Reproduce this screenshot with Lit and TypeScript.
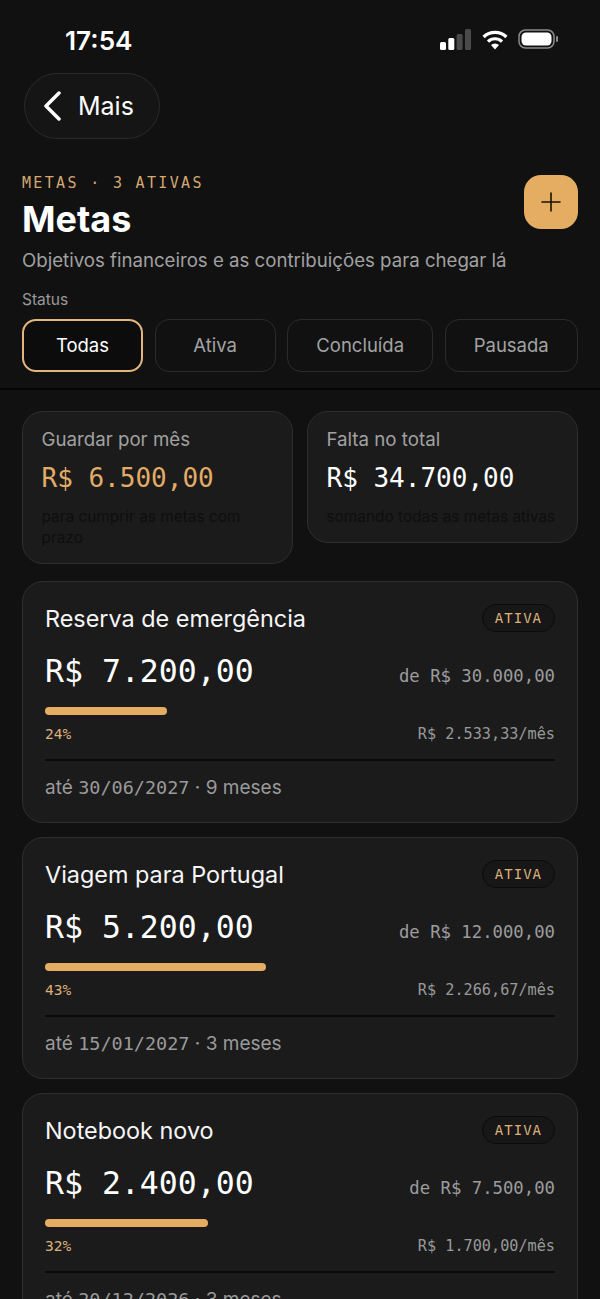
import { LitElement, css, html } from "lit";
import { customElement } from "lit/decorators.js";

const goals = [
  { name: "Reserva de emergência", saved: "R$ 7.200,00", total: "de R$ 30.000,00", pct: 24, width: 24, monthly: "R$ 2.533,33/mês", date: "30/06/2027", left: "9 meses" },
  { name: "Viagem para Portugal", saved: "R$ 5.200,00", total: "de R$ 12.000,00", pct: 43, width: 43.33, monthly: "R$ 2.266,67/mês", date: "15/01/2027", left: "3 meses" },
  { name: "Notebook novo", saved: "R$ 2.400,00", total: "de R$ 7.500,00", pct: 32, width: 32, monthly: "R$ 1.700,00/mês", date: "20/12/2026", left: "3 meses" },
];

@customElement("app-root")
export class AppRoot extends LitElement {
  static styles = css`
    :host {
      display: block;
      height: 1299px;
      overflow: hidden;
      background: #111112;
      color: #fff;
      font-family: Inter, "Liberation Sans", sans-serif;
    }
    .mono { font-family: "DejaVu Sans Mono", "Liberation Mono", monospace; }
    .status {
      height: 73px;
      display: flex;
      justify-content: space-between;
      padding: 25px 42px 0 65px;
      box-sizing: border-box;
    }
    .time { font-size: 26.2px; font-weight: 600; line-height: 31px; }
    .status-icons { display: flex; align-items: flex-start; gap: 10.5px; height: 21px; margin-top: 4px; }
    .back {
      margin-left: 24px;
      width: 136px;
      height: 66px;
      box-sizing: border-box;
      border: 1.5px solid #2a2a2b;
      border-radius: 33px;
      background: #151516;
      display: flex;
      align-items: center;
      gap: 15px;
      padding-left: 18px;
      font-size: 25px;
    }
    .head {
      padding: 35px 22px 0;
      display: flex;
      justify-content: space-between;
      align-items: flex-start;
    }
    .eyebrow { font-size: 15px; letter-spacing: 2.33px; line-height: 18px; color: #d6a871; }
    h1 { margin: 4px 0 0; font-size: 36px; line-height: 46px; font-weight: 700; }
    .add {
      margin: 1px 0 0;
      width: 54px;
      height: 54px;
      border-radius: 17px;
      background: #e5ad62;
      display: grid;
      place-items: center;
    }
    .sub { margin: 5px 22px 0; font-size: 18.65px; line-height: 26px; color: #a1a1a1; }
    .filter-label { margin: 17px 22px 0; font-size: 15.5px; line-height: 20px; color: #9a9a9a; }
    .chips { display: flex; gap: 11.67px; padding: 9px 22px 0; }
    .chip {
      min-width: 121px;
      height: 53px;
      box-sizing: border-box;
      padding: 0 28px 1px;
      border: 1.5px solid #2b2b2c;
      border-radius: 14px;
      display: grid;
      place-items: center;
      font-size: 18.5px;
      color: #a3a3a3;
    }
    .chip.on { border: 2px solid #e3b67e; color: #fff; background: #0c0c0d; }
    .divider { margin-top: 16px; height: 2px; background: #050505; }
    .stats {
      display: grid;
      grid-template-columns: 271px 271px;
      gap: 14px;
      align-items: start;
      padding: 21px 22px 0;
    }
    .stat, .goal {
      box-sizing: border-box;
      background: #1b1b1c;
      border: 1.5px solid #2e2e2f;
      border-radius: 21px;
    }
    .stat { padding: 15px 18.5px 15px; }
    .stat-label { font-size: 18.7px; line-height: 26px; color: #a1a1a1; }
    .stat-value { margin-top: 8px; font-size: 26px; line-height: 34px; }
    .gold { color: #e3ac66; }
    .stat-note { margin-top: 11px; font-size: 15.4px; line-height: 21px; color: #0e0e0e; }
    .goals { display: flex; flex-direction: column; gap: 14px; padding: 17px 22px 0; }
    .goal { height: 242px; padding: 20px 22px 0; flex: none; }
    .row { display: flex; justify-content: space-between; align-items: center; }
    .name { font-size: 23.4px; line-height: 34px; color: #f6f6f6; }
    .badge {
      height: 28px;
      box-sizing: border-box;
      margin-bottom: 2px;
      padding: 0 12px;
      border: 1.5px solid #0b0b0b;
      border-radius: 14px;
      background: #171718;
      display: grid;
      place-items: center;
      font-size: 14px;
      letter-spacing: 1px;
      color: #dcb07a;
    }
    .amounts { margin-top: 13px; }
    .saved { font-size: 31.5px; line-height: 44px; }
    .total { font-size: 17.3px; line-height: 24px; color: #9c9c9c; margin-top: 9px; }
    .bar { margin-top: 14px; height: 8px; }
    .fill { height: 100%; border-radius: 4px; background: #e5ad62; }
    .meta { margin-top: 9px; height: 20px; }
    .pct { font-size: 14.5px; color: #dcb07a; }
    .monthly { font-size: 15.2px; color: #999; }
    .line { margin-top: 15px; height: 2px; background: #0a0a0a; }
    .due { margin-top: 14px; font-size: 19px; line-height: 26px; color: #9a9a9a; }
    .date { font-size: 18.5px; }
  `;

  render() {
    return html`
      <div class="status">
        <div class="time">17:54</div>
        <div class="status-icons">
          <svg width="31" height="21" viewBox="0 0 31 21">
            <rect x="0" y="13" width="6" height="8" rx="1.5" fill="#fff" />
            <rect x="8.3" y="9" width="6" height="12" rx="1.5" fill="#fff" />
            <rect x="16.6" y="5" width="6" height="16" rx="1.5" fill="#4a4a4a" />
            <rect x="25" y="0" width="6" height="21" rx="1.5" fill="#4a4a4a" />
          </svg>
          <svg width="26" height="21" viewBox="0 0 26 21" fill="none" stroke="#fff" stroke-width="3.2">
            <path d="M1.6 8a16.4 16.4 0 0 1 22.8 0" />
            <path d="M6 12.6a10 10 0 0 1 14 0" />
            <path d="M13 20.5l-4-4.4a5.6 5.6 0 0 1 8 0z" fill="#fff" stroke="none" />
          </svg>
          <svg width="40" height="20" viewBox="0 0 40 20">
            <rect x="1" y="1" width="35" height="18" rx="6.5" fill="none" stroke="#8a8a8a" stroke-width="1.5" />
            <rect x="3.5" y="3.5" width="30" height="13" rx="4.5" fill="#fff" />
            <rect x="38" y="7" width="2" height="6" rx="1" fill="#8a8a8a" />
          </svg>
        </div>
      </div>

      <div class="back">
        <svg width="20" height="30" viewBox="0 0 20 30" fill="none" stroke="#fff" stroke-width="3.5" stroke-linecap="round" stroke-linejoin="round">
          <path d="M16 2 3 15l13 13" />
        </svg>
        <span>Mais</span>
      </div>

      <div class="head">
        <div>
          <div class="eyebrow mono">METAS · 3 ATIVAS</div>
          <h1>Metas</h1>
        </div>
        <div class="add">
          <svg width="20" height="20" viewBox="0 0 20 20" stroke="#1a1208" stroke-width="1.6" stroke-linecap="round">
            <path d="M10 1v18M1 10h18" />
          </svg>
        </div>
      </div>
      <p class="sub">Objetivos financeiros e as contribuições para chegar lá</p>
      <div class="filter-label">Status</div>
      <div class="chips">
        <div class="chip on">Todas</div>
        <div class="chip">Ativa</div>
        <div class="chip">Concluída</div>
        <div class="chip">Pausada</div>
      </div>
      <div class="divider"></div>

      <div class="stats">
        <div class="stat">
          <div class="stat-label">Guardar por mês</div>
          <div class="stat-value mono gold">R$ 6.500,00</div>
          <div class="stat-note">para cumprir as metas com prazo</div>
        </div>
        <div class="stat">
          <div class="stat-label">Falta no total</div>
          <div class="stat-value mono">R$ 34.700,00</div>
          <div class="stat-note">somando todas as metas ativas</div>
        </div>
      </div>

      <div class="goals">
        ${goals.map(
          (g) => html`
            <div class="goal">
              <div class="row">
                <div class="name">${g.name}</div>
                <div class="badge mono">ATIVA</div>
              </div>
              <div class="row amounts">
                <div class="saved mono">${g.saved}</div>
                <div class="total mono">${g.total}</div>
              </div>
              <div class="bar"><div class="fill" style="width: ${g.width}%"></div></div>
              <div class="row meta">
                <div class="pct mono">${g.pct}%</div>
                <div class="monthly mono">${g.monthly}</div>
              </div>
              <div class="line"></div>
              <div class="due">até <span class="date mono">${g.date}</span> · ${g.left}</div>
            </div>
          `
        )}
      </div>
    `;
  }
}
